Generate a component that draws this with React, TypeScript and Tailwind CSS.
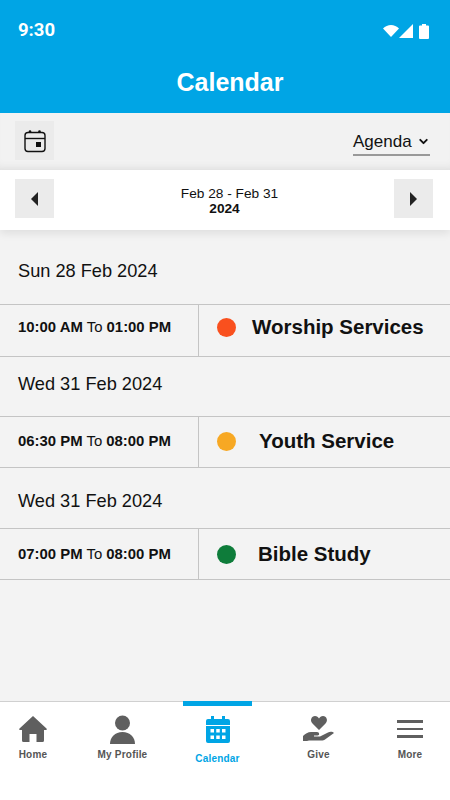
import { ChevronDown } from 'lucide-react';

const font = { fontFamily: '"Liberation Sans", Arial, sans-serif' };

interface EventItem {
  date: string;
  dateBox: string;
  start: string;
  end: string;
  title: string;
  titleGap: string;
  color: string;
  rowBox: string;
  rowInner: string;
}

const events: EventItem[] = [
  { date: 'Sun 28 Feb 2024', dateBox: 'h-[74px] pt-[10px]', start: '10:00 AM', end: '01:00 PM', title: 'Worship Services', titleGap: 'ml-[16px]', color: 'bg-[#f9501e]', rowBox: 'h-[53px]', rowInner: 'pb-[6px]' },
  { date: 'Wed 31 Feb 2024', dateBox: 'h-[59px] pb-[3px]', start: '06:30 PM', end: '08:00 PM', title: 'Youth Service', titleGap: 'ml-[23px]', color: 'bg-[#f7a823]', rowBox: 'h-[52px]', rowInner: 'pb-[1px]' },
  { date: 'Wed 31 Feb 2024', dateBox: 'h-[60px] pt-[8px]', start: '07:00 PM', end: '08:00 PM', title: 'Bible Study', titleGap: 'ml-[22px]', color: 'bg-[#0e7c3a]', rowBox: 'h-[52px]', rowInner: '' },
];

function EventBlock({ item }: { item: EventItem }) {
  return (
    <div>
      <div className={`flex items-center pl-[18px] text-[18.2px] text-[#111] ${item.dateBox}`}>{item.date}</div>
      <div className={`flex border-y border-[#c4c4c4] ${item.rowBox}`}>
        <div className={`flex w-[199px] items-center border-r border-[#c4c4c4] pl-[18px] text-[14.9px] text-[#111] ${item.rowInner}`}>
          <b>{item.start}</b>
          <span className="mx-[4px]">To</span>
          <b>{item.end}</b>
        </div>
        <div className={`flex flex-1 items-center pl-[18px] ${item.rowInner}`}>
          <span className={`h-[19px] w-[19px] rounded-full ${item.color}`} />
          <span className={`text-[20.5px] font-bold text-[#111] ${item.titleGap}`}>{item.title}</span>
        </div>
      </div>
    </div>
  );
}

function NavItem({ label, icon, width, active }: { label: string; icon: React.ReactNode; width: string; active?: boolean }) {
  return (
    <div className={`flex flex-col items-center ${width}`}>
      <div className="flex h-[34px] items-center justify-center">{icon}</div>
      <span className={`text-[10px] leading-[12px] font-bold tracking-[0.2px] ${active ? 'mt-[7px] text-[#00a5e5]' : 'mt-[3px] text-[#555]'}`}>{label}</span>
    </div>
  );
}

export default function App() {
  return (
    <div style={font} className="flex h-[800px] w-[450px] flex-col overflow-hidden bg-[#f3f3f3]">
      <header className="h-[113px] bg-[#00a5e5] pt-[20px] text-white">
        <div className="flex h-[22px] items-center justify-between pr-[21px] pl-[18px]">
          <span className="text-[18.5px] font-bold" style={{ fontFamily: 'Roboto, sans-serif' }}>9:30</span>
          <div className="flex items-center">
            <svg width="16" height="12" viewBox="0 0 16 12" fill="white"><path d="M0 3.500 8 12l8-8.500C13.800 1.300 11 0 8 0S2.200 1.300 0 3.500z" /></svg>
            <svg width="14" height="14" viewBox="0 0 14 14" fill="white"><path d="M14 0v14H0z" /></svg>
            <svg width="10" height="15" viewBox="0 0 10 15" fill="white" className="ml-[6px]"><path d="M3 0h4v1.500h2a1 1 0 0 1 1 1V14a1 1 0 0 1-1 1H1a1 1 0 0 1-1-1V2.500a1 1 0 0 1 1-1h2z" /></svg>
          </div>
        </div>
        <h1 className="mt-[25px] pl-[10px] text-center text-[25px] leading-[30px] font-bold">Calendar</h1>
      </header>

      <div className="flex h-[57px] items-start justify-between bg-[#f2f2f2] pt-[8px] pr-[20px] pl-[15px] shadow-[inset_0_-8px_8px_-6px_rgba(0,0,0,0.08)]">
        <div className="flex h-[39px] w-[39px] items-center justify-center bg-[#ebebeb]">
          <svg width="24" height="24" viewBox="0 0 24 24" fill="none" stroke="#111" strokeWidth="1.400">
            <rect x="2" y="3.500" width="20" height="19" rx="3" />
            <path d="M2 9.500h20" />
            <circle cx="7" cy="2.500" r="1.300" fill="#111" stroke="none" />
            <circle cx="16.500" cy="2.500" r="1.300" fill="#111" stroke="none" />
            <rect x="13" y="13" width="5" height="5" fill="#111" stroke="none" />
          </svg>
        </div>
        <div className="mt-[8px] flex h-[27px] w-[77px] items-center justify-between border-b-2 border-[#999] text-[17px] text-[#111]">
          Agenda
          <ChevronDown size={13} strokeWidth={3.5} color="#111" />
        </div>
      </div>

      <div className="z-10 flex h-[60px] items-start justify-between bg-white pt-[9px] pr-[17px] pl-[15px] shadow-[0_4px_8px_rgba(0,0,0,0.08)]">
        <div className="flex h-[39px] w-[39px] items-center justify-center bg-[#ebebeb]">
          <div className="h-0 w-0 border-y-[7px] border-r-[7px] border-y-transparent border-r-[#222]" />
        </div>
        <div className="pt-[8px] pl-[11px] text-center text-[#111]">
          <div className="text-[13.700px] leading-[14px]">Feb 28 - Feb 31</div>
          <div className="mt-[1px] pr-[10px] text-[13.700px] leading-[14px] font-bold">2024</div>
        </div>
        <div className="flex h-[39px] w-[39px] items-center justify-center bg-[#ebebeb]">
          <div className="h-0 w-0 border-y-[7px] border-l-[7px] border-y-transparent border-l-[#222]" />
        </div>
      </div>

      <main className="flex-1">
        {events.map((item, i) => (
          <EventBlock key={i} item={item} />
        ))}
      </main>

      <nav className="relative flex h-[99px] border-t border-[#d0d0d0] bg-white pt-[10px]">
        <div className="absolute top-[-1px] left-[183px] h-[5px] w-[69px] bg-[#00a5e5]" />
        <NavItem width="w-[66px]" label="Home" icon={
          <svg width="28" height="26" viewBox="0 0 28 26" fill="#5f5f5f"><path d="M14 0 .5 12.500c-.8.8-.2 1.500.5 1.500H3v10.500A1.500 1.500 0 0 0 4.500 26h6v-8h7v8h6a1.500 1.500 0 0 0 1.500-1.500V14h2c.7 0 1.300-.7.5-1.500z" /></svg>
        } />
        <NavItem width="w-[113px]" label="My Profile" icon={
          <svg width="25" height="29" viewBox="0 0 25 29" fill="#5f5f5f"><circle cx="12.500" cy="8" r="7.500" /><path d="M0 29c0-7 5-12 12.500-12S25 22 25 29z" /></svg>
        } />
        <NavItem active width="w-[77px]" label="Calendar" icon={
          <svg width="24" height="27" viewBox="0 0 24 27" fill="#00a5e5"><path d="M5 0h3v3h8V0h3v3h3a2 2 0 0 1 2 2v4H0V5a2 2 0 0 1 2-2h3z" /><path fillRule="evenodd" d="M0 10h24v15a2 2 0 0 1-2 2H2a2 2 0 0 1-2-2zM4.500 13v3.500H8V13zm5.750 0v3.500h3.500V13zM16 13v3.500h3.500V13zM4.500 19.500V23H8v-3.500zm5.750 0V23h3.500v-3.500zm5.750 0V23h3.500v-3.500z" /></svg>
        } />
        <NavItem width="w-[125px]" label="Give" icon={
          <svg width="31" height="27" viewBox="0 0 31 27" fill="#5f5f5f"><path d="M16 14 9.500 7.500C6.500 4.500 8.500 0 12 0c2 0 3 1 4 2.500C17 1 18 0 20 0c3.500 0 5.500 4.500 2.500 7.500z" /><path d="M0 20c2-2 5-4 8-4h6c2.500 0 3 3.500.5 3.500H11v1h6l8-4c2.500-1.300 5-.5 6 .5l-9 6.500c-1 .7-2 1-3.500 1H6l-2 .5H0z" /></svg>
        } />
        <NavItem width="w-[58px]" label="More" icon={
          <div className="flex w-[26px] flex-col gap-[5px]">
            <div className="h-[2.500px] bg-[#5f5f5f]" />
            <div className="h-[2.500px] bg-[#5f5f5f]" />
            <div className="h-[2.500px] bg-[#5f5f5f]" />
          </div>
        } />
      </nav>
    </div>
  );
}
